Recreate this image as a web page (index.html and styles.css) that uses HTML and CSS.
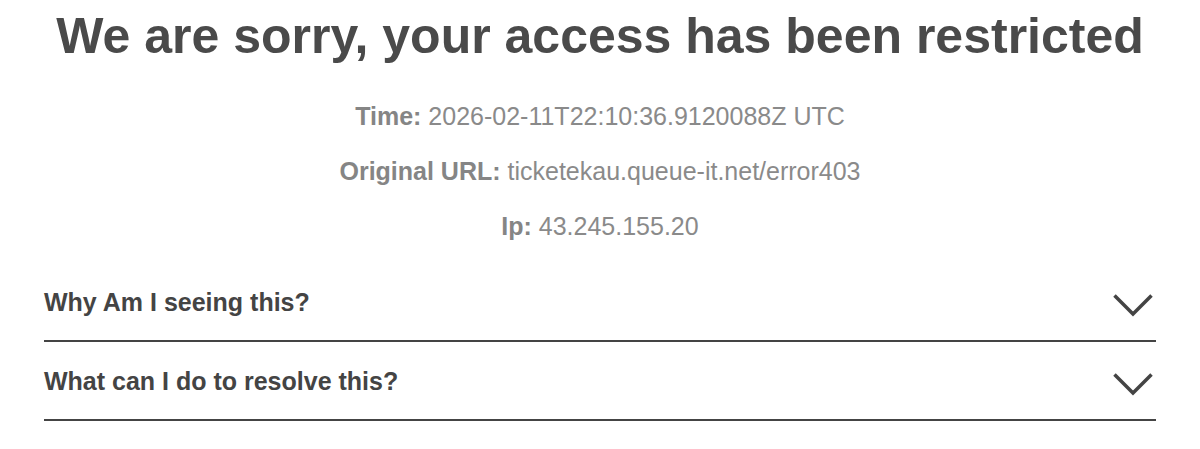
FILE: index.html
```html
<!DOCTYPE html>
<html lang="en">
<head>
<meta charset="utf-8">
<title>Access restricted</title>
<link rel="stylesheet" href="styles.css">
</head>
<body>
<main class="page">
  <h1 class="title">We are sorry, your access has been restricted</h1>
  <div class="info">
    <p class="info-line"><b>Time:</b> 2026-02-11T22:10:36.9120088Z UTC</p>
    <p class="info-line"><b>Original URL:</b> ticketekau.queue-it.net/error403</p>
    <p class="info-line"><b>Ip:</b> 43.245.155.20</p>
  </div>
  <div class="accordion">
    <div class="acc-item">
      <span class="acc-q">Why Am I seeing this?</span>
      <svg class="chev" width="42" height="26" viewBox="0 0 42 26"><polyline points="2.5,2.5 21,21 39.5,2.5" fill="none" stroke="#444" stroke-width="3.5"/></svg>
    </div>
    <div class="acc-item">
      <span class="acc-q">What can I do to resolve this?</span>
      <svg class="chev" width="42" height="26" viewBox="0 0 42 26"><polyline points="2.5,2.5 21,21 39.5,2.5" fill="none" stroke="#444" stroke-width="3.5"/></svg>
    </div>
  </div>
</main>
</body>
</html>
```

FILE: styles.css
```css
html, body {
  margin: 0;
  padding: 0;
  background: #fff;
}
body {
  font-family: "Liberation Sans", Arial, Helvetica, sans-serif;
}
.page {
  padding: 7px 44px 0;
}
.title {
  margin: 0;
  font-size: 50px;
  line-height: 58px;
  font-weight: bold;
  color: #4a4a4a;
  text-align: center;
}
.info {
  margin-top: 37px;
  display: flex;
  flex-direction: column;
  gap: 27px;
}
.info-line {
  margin: 0;
  font-size: 25px;
  line-height: 28px;
  color: #8a8a8a;
  text-align: center;
}
.info-line b {
  font-weight: bold;
  color: #858585;
}
.accordion {
  margin-top: 23px;
}
.acc-item {
  display: flex;
  align-items: center;
  justify-content: space-between;
  padding: 25px 2px 24px 0;
  border-bottom: 2px solid #444;
}
.acc-q {
  font-size: 25px;
  line-height: 28px;
  font-weight: bold;
  color: #444;
}
.chev {
  display: block;
  margin: 4px 0 -4px;
}
```
